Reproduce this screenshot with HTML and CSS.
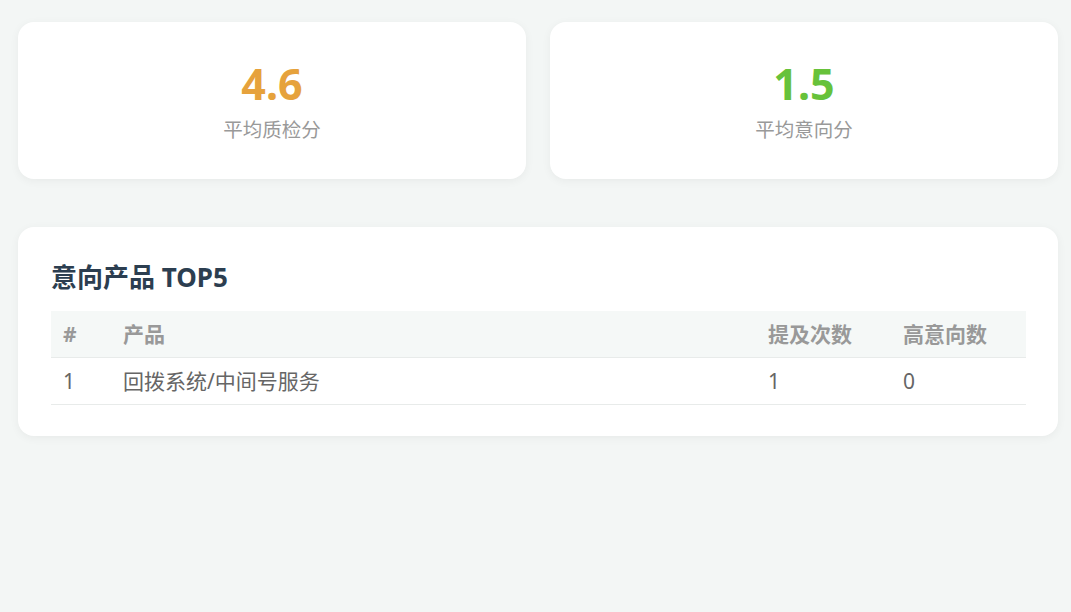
FILE: index.html
```html
<!DOCTYPE html>
<html lang="zh-CN">
<head>
<meta charset="utf-8">
<title>质检统计</title>
<link rel="stylesheet" href="styles.css">
</head>
<body>
<main class="page">
  <section class="stats">
    <div class="stat-card">
      <div class="stat-value warn">4.6</div>
      <div class="stat-label">平均质检分</div>
    </div>
    <div class="stat-card">
      <div class="stat-value ok">1.5</div>
      <div class="stat-label">平均意向分</div>
    </div>
  </section>

  <section class="panel">
    <h2 class="panel-title">意向产品 TOP5</h2>
    <table class="rank-table">
      <colgroup>
        <col class="c-idx">
        <col class="c-name">
        <col class="c-num">
        <col class="c-num">
      </colgroup>
      <thead>
        <tr>
          <th>#</th>
          <th>产品</th>
          <th>提及次数</th>
          <th>高意向数</th>
        </tr>
      </thead>
      <tbody>
        <tr>
          <td>1</td>
          <td>回拨系统/中间号服务</td>
          <td>1</td>
          <td>0</td>
        </tr>
      </tbody>
    </table>
  </section>
</main>
</body>
</html>
```

FILE: styles.css
```css
* {
  box-sizing: border-box;
}

html,
body {
  margin: 0;
  height: 100%;
}

body {
  background: #f3f6f5;
  font-family: "Noto Sans", "Noto Sans CJK SC", sans-serif;
  color: #606266;
}

.page {
  padding: 22px 13px 20px 18px;
}

.stats {
  display: grid;
  grid-template-columns: 1fr 1fr;
  gap: 24px;
}

.stat-card {
  background: #fff;
  border-radius: 16px;
  box-shadow: 0 2px 10px rgba(0, 0, 0, 0.05);
  padding: 37px 20px 35px;
  text-align: center;
}

.stat-value {
  font-size: 43px;
  line-height: 50px;
  font-weight: 700;
}

.stat-value.warn {
  color: #e6a23c;
}

.stat-value.ok {
  color: #67c23a;
}

.stat-label {
  margin-top: 7px;
  font-size: 19.5px;
  line-height: 28px;
  color: #999;
}

.panel {
  margin-top: 48px;
  background: #fff;
  border-radius: 16px;
  box-shadow: 0 2px 10px rgba(0, 0, 0, 0.05);
  padding: 32px 32px 31px 33px;
}

.panel-title {
  margin: 0 0 16px;
  font-size: 26px;
  line-height: 36px;
  font-weight: 700;
  color: #2c3e50;
}

.rank-table {
  width: 100%;
  border-collapse: collapse;
  table-layout: fixed;
}

.c-idx {
  width: 60px;
}

.c-num {
  width: 135px;
}

.rank-table th,
.rank-table td {
  text-align: left;
  padding: 8px 12px;
  line-height: 30px;
  font-size: 21px;
  border-bottom: 1px solid #e8ebea;
}

.rank-table th {
  background: #f5f8f7;
  color: #999;
  font-weight: 700;
}

.rank-table td {
  color: #666;
}
```
